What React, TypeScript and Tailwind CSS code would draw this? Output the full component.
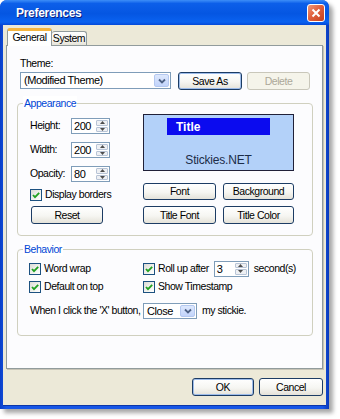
import type { ReactNode } from 'react';

function Btn({ children, className = '', disabled = false, def = false }: { children: ReactNode; className?: string; disabled?: boolean; def?: boolean }) {
  return (
    <button
      className={`flex items-center justify-center rounded-[3px] border leading-[13px] ${
        disabled
          ? 'border-[#c9c7ba] bg-[#f5f4ea] text-[#aca899]'
          : 'border-[#1c3c64] bg-[linear-gradient(180deg,#ffffff_0%,#f6f6f2_55%,#e4e2d9_100%)] text-black'
      } ${def ? 'shadow-[inset_0_0_0_1px_#9dbcea]' : ''} ${className}`}
    >
      {children}
    </button>
  );
}

function Check({ label }: { label: string }) {
  return (
    <div className="flex items-center gap-[3px] whitespace-nowrap">
      <div className="flex h-[12px] w-[12px] shrink-0 items-center justify-center border border-[#1c5180] bg-[linear-gradient(135deg,#dcdcd5_0%,#f6f6f4_70%,#ffffff_100%)]">
        <svg width="10" height="10" viewBox="0 0 10 10">
          <path d="M2 5 L4 7.2 L8.2 2.8" fill="none" stroke="#21a121" strokeWidth="1.8" />
        </svg>
      </div>
      <span>{label}</span>
    </div>
  );
}

function Spinner({ value, className = '' }: { value: string; className?: string }) {
  return (
    <div className={`flex h-[16px] border border-[#7f9db9] bg-white ${className}`}>
      <div className="flex-1 pl-[2px] text-[11px] leading-[14px]">{value}</div>
      <div className="flex w-[14px] flex-col gap-[1px] p-[1px]">
        <div className="flex flex-1 items-center justify-center rounded-[1px] border border-[#b8c4d6] bg-[#eef0f3]">
          <svg width="5" height="3" viewBox="0 0 5 3">
            <path d="M0 3 L2.5 0 L5 3 Z" fill="#4d4d4d" />
          </svg>
        </div>
        <div className="flex flex-1 items-center justify-center rounded-[1px] border border-[#b8c4d6] bg-[#eef0f3]">
          <svg width="5" height="3" viewBox="0 0 5 3">
            <path d="M0 0 L2.5 3 L5 0 Z" fill="#4d4d4d" />
          </svg>
        </div>
      </div>
    </div>
  );
}

function Select({ value, className = '' }: { value: string; className?: string }) {
  return (
    <div className={`flex border border-[#7f9db9] bg-white ${className}`}>
      <div className="flex flex-1 items-center pl-[3px] text-[11px]">{value}</div>
      <div className="m-[1px] flex w-[15px] items-center justify-center rounded-[2px] border border-[#b4c8f0] bg-[linear-gradient(180deg,#dde8fd_0%,#c2d4fb_100%)]">
        <svg width="8" height="6" viewBox="0 0 8 6">
          <path d="M1 1.5 L4 4.5 L7 1.5" fill="none" stroke="#4d6185" strokeWidth="1.8" />
        </svg>
      </div>
    </div>
  );
}

function GroupBox({ label, className = '', children }: { label: string; className?: string; children: ReactNode }) {
  return (
    <div className={`relative rounded-[4px] border border-[#d0d0bf] ${className}`}>
      <span className="absolute -top-[8px] left-[5px] bg-white px-[1px] leading-[14px] text-[#0046d5]">{label}</span>
      {children}
    </div>
  );
}

export default function App() {
  return (
    <div className="h-[419px] w-[340px] bg-white font-[family-name:'Liberation_Sans',sans-serif] text-[10.5px] tracking-[-0.45px] text-black">
      <div className="flex h-[409px] w-[329px] flex-col overflow-hidden rounded-t-[7px] bg-[linear-gradient(90deg,#0a3fc8_0%,#1656e6_2%,#1656e6_98%,#0a3aba_100%)] shadow-[4px_4px_4px_rgba(0,0,0,0.35)]">
        {/* title bar */}
        <div className="flex h-[25px] items-center justify-between bg-[linear-gradient(180deg,#3d8ef8_0%,#0c5fe9_14%,#0556e2_55%,#0a62f0_88%,#0448d8_100%)] pl-[16px] pr-[4px]">
          <span className="text-[12px] font-bold tracking-[-0.3px] text-white [text-shadow:1px_1px_0_#0a1e80]">Preferences</span>
          <div className="flex h-[18px] w-[18px] items-center justify-center rounded-[3px] border border-white bg-[linear-gradient(135deg,#f09878_0%,#e0613e_45%,#c6401c_100%)]">
            <svg width="10" height="10" viewBox="0 0 10 10">
              <path d="M1.5 1.5 L8.5 8.5 M8.5 1.5 L1.5 8.5" stroke="#ffffff" strokeWidth="2" />
            </svg>
          </div>
        </div>

        {/* body */}
        <div className="mx-[3px] mb-[3px] flex flex-1 flex-col border-b-[1px] border-b-[#0b36a8] bg-[#ece9d8]">
          {/* tabs */}
          <div className="relative z-10 ml-[4px] mt-[3px] flex items-end">
            <div className="-mb-[1px] flex h-[18px] w-[45px] items-center justify-center rounded-t-[3px] border border-b-0 border-[#919b9c] border-t-[3px] border-t-[#f5b53f] bg-white pb-[1px]">
              General
            </div>
            <div className="flex h-[14px] w-[35px] items-center justify-center rounded-t-[3px] border border-b-0 border-l-0 border-[#919b9c] bg-[linear-gradient(180deg,#ffffff_0%,#f3f2ec_60%,#e6e4da_100%)]">
              System
            </div>
          </div>

          {/* tab panel */}
          <div className="ml-[3px] flex h-[324px] w-[317px] flex-col border border-[#919b9c] bg-[#fcfcfe] shadow-[1px_1px_0_#c7c4b6]">
            <div className="ml-[13px] mt-[10px] h-[14px] leading-[14px]">Theme:</div>
            <div className="ml-[13px] mt-[2px] flex items-start">
              <Select value="(Modified Theme)" className="h-[17px] w-[151px]" />
              <Btn def className="ml-[7px] h-[18px] w-[64px]">Save As</Btn>
              <Btn disabled className="ml-[5px] h-[18px] w-[63px]">Delete</Btn>
            </div>

            <GroupBox label="Appearance" className="ml-[10px] mt-[13px] h-[133px] w-[296px]">
              <div className="flex">
                <div className="ml-[12px] flex w-[113px] flex-col">
                  <div className="mt-[14px] flex h-[16px] items-center">
                    <span className="w-[41px]">Height:</span>
                    <Spinner value="200" className="w-[39px]" />
                  </div>
                  <div className="mt-[8px] flex h-[16px] items-center">
                    <span className="w-[41px]">Width:</span>
                    <Spinner value="200" className="w-[39px]" />
                  </div>
                  <div className="mt-[8px] flex h-[16px] items-center">
                    <span className="w-[41px]">Opacity:</span>
                    <Spinner value="80" className="w-[39px]" />
                  </div>
                  <div className="mt-[7px] flex h-[12px] items-center">
                    <Check label="Display borders" />
                  </div>
                  <Btn className="ml-[1px] mt-[5px] h-[18px] w-[72px]">Reset</Btn>
                </div>
                <div className="flex w-[151px] flex-col">
                  <div className="mt-[10px] flex h-[57px] flex-col border border-[#202038] bg-[#b3d1f9]">
                    <div className="ml-[23px] mt-[3px] flex h-[17px] w-[103px] items-center bg-[#0b0bef] pl-[9px] text-[12px] font-bold tracking-[0px] text-white">
                      Title
                    </div>
                    <div className="mt-auto pb-[2px] text-center text-[12px] leading-[15px] tracking-[-0.2px] text-[#1c2c48]">Stickies.NET</div>
                  </div>
                  <div className="mt-[12px] flex">
                    <Btn className="h-[17px] w-[73px]">Font</Btn>
                    <Btn className="ml-[7px] h-[17px] w-[71px]">Background</Btn>
                  </div>
                  <div className="mt-[6px] flex">
                    <Btn className="h-[18px] w-[73px]">Title Font</Btn>
                    <Btn className="ml-[7px] h-[18px] w-[71px]">Title Color</Btn>
                  </div>
                </div>
              </div>
            </GroupBox>

            <GroupBox label="Behavior" className="ml-[10px] mt-[13px] h-[87px] w-[296px]">
              <div className="ml-[11px] flex flex-col">
                <div className="mt-[10px] flex h-[17px] items-center">
                  <div className="w-[114px]">
                    <Check label="Word wrap" />
                  </div>
                  <Check label="Roll up after" />
                  <Spinner value="3" className="ml-[5px] w-[35px]" />
                  <span className="ml-[5px]">second(s)</span>
                </div>
                <div className="mt-[3px] flex h-[13px] items-center">
                  <div className="w-[114px]">
                    <Check label="Default on top" />
                  </div>
                  <Check label="Show Timestamp" />
                </div>
                <div className="mt-[10px] flex h-[16px] items-center">
                  <span className="w-[114px] whitespace-nowrap pl-[1px]">When I click the 'X' button,</span>
                  <Select value="Close" className="h-[16px] w-[54px]" />
                  <span className="ml-[5px]">my stickie.</span>
                </div>
              </div>
            </GroupBox>
          </div>

          {/* footer buttons */}
          <div className="mr-[3px] mt-[9px] flex justify-end gap-[5px]">
            <Btn def className="h-[18px] w-[62px]">OK</Btn>
            <Btn className="h-[18px] w-[64px]">Cancel</Btn>
          </div>
        </div>
      </div>
    </div>
  );
}
